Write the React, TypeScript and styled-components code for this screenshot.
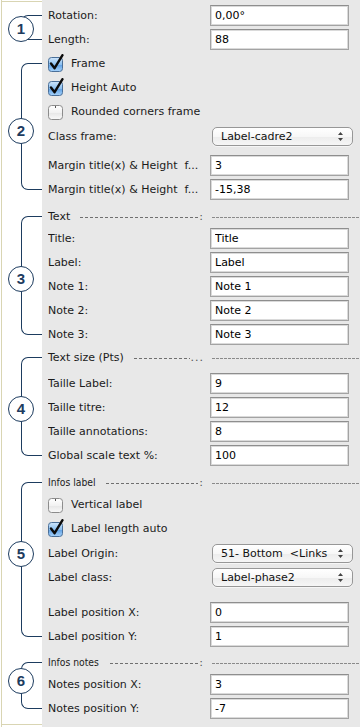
import React from 'react'
import styled, { createGlobalStyle } from 'styled-components'

const NAVY = '#1d3c5f'
const BEIGE = '#d9d5b3'

const GlobalStyle = createGlobalStyle`
  html, body { margin: 0; padding: 0; background: #e8e8e8; }
  body { font-family: "DejaVu Sans", Verdana, sans-serif; }
`

const Page = styled.div`
  width: 360px;
  height: 727px;
  display: flex;
  flex-direction: column;
  background: #e8e8e8;
  overflow: hidden;
`

const Section = styled.section<{ $grow?: boolean }>`
  display: grid;
  grid-template-columns: 42px 1fr;
  flex: ${p => (p.$grow ? 1 : 'none')};
`

// the gutter takes the section's height from the rows, never from the badge
const Gutter = styled.div<{ $first?: boolean; $last?: boolean }>`
  contain: size;
  background: #fff;
  display: flex;
  flex-direction: column;
  box-shadow: inset 1px 0 0 #fff, inset 2px 0 0 ${BEIGE}
    ${p => (p.$first ? `, inset 0 1px 0 #fff, inset 0 2px 0 ${BEIGE}` : '')}
    ${p => (p.$last ? `, inset 0 -2px 0 #fff, inset 0 -3px 0 ${BEIGE}` : '')};
`

const Bracket = styled.div<{ $top: number; $bottom: number }>`
  flex: 1;
  min-height: 0;
  margin: ${p => p.$top}px 0 ${p => p.$bottom}px 21px;
  border: 1px solid ${NAVY};
  border-right: none;
  border-radius: 7px 0 0 7px;
  display: flex;
  align-items: center;
`

const Badge = styled.div<{ $shift: number }>`
  flex: none;
  width: 26px;
  height: 26px;
  box-sizing: border-box;
  margin-left: -14px;
  transform: translateY(${p => p.$shift}px);
  border: 1.5px solid ${NAVY};
  border-radius: 50%;
  background: #fff;
  display: flex;
  align-items: center;
  justify-content: center;
  color: ${NAVY};
  font: bold 15px "Liberation Sans", Arial, sans-serif;
`

const Body = styled.div<{ $pt?: number }>`
  display: flex;
  flex-direction: column;
  padding: ${p => p.$pt ?? 0}px 0 0 6px;
`

const Row = styled.div<{ $mt?: number; $h?: number }>`
  display: grid;
  grid-template-columns: 162px 1fr;
  align-items: center;
  height: ${p => p.$h ?? 24}px;
  margin-top: ${p => p.$mt ?? 0}px;
`

const Label = styled.span`
  font-size: 11px;
  color: #1b1b1b;
  white-space: pre;
  overflow: hidden;
`

const Field = styled.input`
  width: 139px;
  height: 21px;
  box-sizing: border-box;
  margin: 0;
  padding: 0 4px;
  border: 1px solid #a3a3a3;
  border-top-color: #8e8e8e;
  box-shadow: inset 0 0 0 1px #dadada;
  background: #fff;
  font: 11px "DejaVu Sans", Verdana, sans-serif;
  color: #000;
  outline: none;
`

const PopUp = styled.div`
  width: 141px;
  height: 19px;
  margin-left: 2px;
  box-sizing: border-box;
  border: 1px solid #979797;
  border-radius: 5px;
  background: linear-gradient(#ffffff, #f7f7f7 50%, #ececec 51%, #f6f6f6);
  box-shadow: 0 1px 0 rgba(255, 255, 255, 0.6);
  display: flex;
  align-items: center;
  justify-content: space-between;
  padding: 0 8px 0 8px;
  font-size: 11px;
  color: #111;
  white-space: pre;
`

const CheckLine = styled.label`
  grid-column: 1 / -1;
  display: flex;
  align-items: center;
  gap: 6px;
  font-size: 11px;
  color: #1b1b1b;
`

const HeadLeft = styled.div`
  display: flex;
  align-items: center;
  font-size: 11px;
  color: #1b1b1b;
  padding-right: 6px;
`

const HeadTitle = styled.span<{ $narrow?: boolean }>`
  white-space: pre;
  display: inline-block;
  ${p =>
    p.$narrow
      ? `transform: scaleX(0.84); transform-origin: left center; margin-right: -9px;`
      : ''}
`

const Dashes = styled.span`
  flex: 1;
  height: 1px;
  margin: 2px 1px 0 10px;
  background: repeating-linear-gradient(to right, #6f6f6f 0 3px, transparent 3px 5px);
`

const Suffix = styled.span`
  color: #555;
  font-size: 11px;
  letter-spacing: 1px;
`

const RuleLine = styled.span`
  display: block;
  height: 1px;
  margin: 2px 0 0 2px;
  background: repeating-linear-gradient(to right, #8a8a8a 0 3px, transparent 3px 4px);
`

const CheckBox = ({ on }: { on?: boolean }) => (
  <svg width="18" height="18" viewBox="0 0 18 18" style={{ marginLeft: -1 }}>
    <defs>
      <linearGradient id="cbOn" x1="0" y1="0" x2="0" y2="1">
        <stop offset="0" stopColor="#cfe6fb" />
        <stop offset="0.5" stopColor="#8cc0f0" />
        <stop offset="0.51" stopColor="#5e9fe3" />
        <stop offset="1" stopColor="#a7d3fb" />
      </linearGradient>
      <linearGradient id="cbOff" x1="0" y1="0" x2="0" y2="1">
        <stop offset="0" stopColor="#ffffff" />
        <stop offset="0.5" stopColor="#f2f2f2" />
        <stop offset="0.51" stopColor="#e6e6e6" />
        <stop offset="1" stopColor="#fafafa" />
      </linearGradient>
    </defs>
    <rect x="1.5" y="3.5" width="14" height="14" rx="3" fill={on ? 'url(#cbOn)' : 'url(#cbOff)'} stroke={on ? '#4a6f98' : '#8c8c8c'} />
    {on ? (
      <path d="M4 9.5 L7.6 14.2 L15.5 1.2" fill="none" stroke="#0b0b0b" strokeWidth="2.4" strokeLinecap="round" strokeLinejoin="round" />
    ) : (
      <path d="M8.5 4 V6" stroke="#555" strokeWidth="1" />
    )}
  </svg>
)

const Arrows = () => (
  <svg width="7" height="11" viewBox="0 0 7 11">
    <path d="M3.5 1 L6 4 H1 Z M3.5 10 L6 7 H1 Z" fill="#444" />
  </svg>
)

const FieldRow = ({ label, value, mt }: { label: string; value: string; mt?: number }) => (
  <Row $mt={mt}>
    <Label>{label}</Label>
    <Field readOnly value={value} />
  </Row>
)

const SelectRow = ({ label, value, mt }: { label: string; value: string; mt?: number }) => (
  <Row $mt={mt}>
    <Label>{label}</Label>
    <PopUp>
      <span>{value}</span>
      <Arrows />
    </PopUp>
  </Row>
)

const CheckRow = ({ label, on, mt }: { label: string; on?: boolean; mt?: number }) => (
  <Row $mt={mt}>
    <CheckLine>
      <CheckBox on={on} />
      {label}
    </CheckLine>
  </Row>
)

const HeadRow = ({ title, suffix, narrow, mt }: { title: string; suffix: string; narrow?: boolean; mt?: number }) => (
  <Row $h={20} $mt={mt}>
    <HeadLeft>
      <HeadTitle $narrow={narrow}>{title}</HeadTitle>
      <Dashes />
      <Suffix>{suffix}</Suffix>
    </HeadLeft>
    <RuleLine />
  </Row>
)

const Mark = ({ n, top, bottom, shift = 0 }: { n: number; top: number; bottom: number; shift?: number }) => (
  <Bracket $top={top} $bottom={bottom}>
    <Badge $shift={shift}>{n}</Badge>
  </Bracket>
)

export default function App() {
  return (
    <Page>
      <GlobalStyle />

      <Section>
        <Gutter $first>
          <Mark n={1} top={15} bottom={11} shift={1} />
        </Gutter>
        <Body $pt={3}>
          <FieldRow label="Rotation:" value="0,00°" />
          <FieldRow label="Length:" value="88" />
        </Body>
      </Section>

      <Section>
        <Gutter>
          <Mark n={2} top={12} bottom={11} shift={4} />
        </Gutter>
        <Body>
          <CheckRow label="Frame" on />
          <CheckRow label="Height Auto" on />
          <CheckRow label="Rounded corners frame" />
          <SelectRow label="Class frame:" value="Label-cadre2" mt={1} />
          <FieldRow label="Margin title(x) & Height  f..." value="3" mt={5} />
          <FieldRow label="Margin title(x) & Height  f..." value="-15,38" />
        </Body>
      </Section>

      <Section>
        <Gutter>
          <Mark n={3} top={15} bottom={11} shift={3} />
        </Gutter>
        <Body $pt={5}>
          <HeadRow title="Text" suffix=":" />
          <FieldRow label="Title:" value="Title" />
          <FieldRow label="Label:" value="Label" />
          <FieldRow label="Note 1:" value="Note 1" />
          <FieldRow label="Note 2:" value="Note 2" />
          <FieldRow label="Note 3:" value="Note 3" />
        </Body>
      </Section>

      <Section>
        <Gutter>
          <Mark n={4} top={11} bottom={11} shift={2} />
        </Gutter>
        <Body $pt={1}>
          <HeadRow title="Text size (Pts)" suffix="..." />
          <FieldRow label="Taille Label:" value="9" mt={4} />
          <FieldRow label="Taille titre:" value="12" />
          <FieldRow label="Taille annotations:" value="8" />
          <FieldRow label="Global scale text %:" value="100" />
        </Body>
      </Section>

      <Section>
        <Gutter>
          <Mark n={5} top={15} bottom={11} shift={-6} />
        </Gutter>
        <Body $pt={5}>
          <HeadRow title="Infos label" suffix=":" narrow />
          <CheckRow label="Vertical label" />
          <CheckRow label="Label length auto" on />
          <SelectRow label="Label Origin:" value="51- Bottom  <Links" mt={1} />
          <SelectRow label="Label class:" value="Label-phase2" />
          <FieldRow label="Label position X:" value="0" mt={11} />
          <FieldRow label="Label position Y:" value="1" />
        </Body>
      </Section>

      <Section $grow>
        <Gutter $last>
          <Mark n={6} top={14} bottom={18} shift={-5} />
        </Gutter>
        <Body $pt={4}>
          <HeadRow title="Infos notes" suffix=":" narrow />
          <FieldRow label="Notes position X:" value="3" />
          <FieldRow label="Notes position Y:" value="-7" />
        </Body>
      </Section>
    </Page>
  )
}
